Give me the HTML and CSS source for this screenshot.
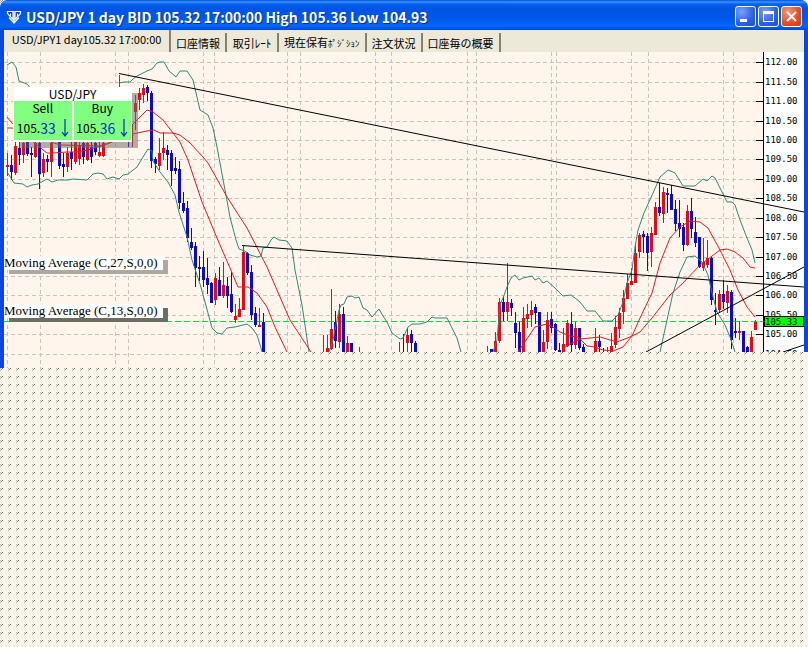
FILE: index.html
```
<!DOCTYPE html>
<html lang="ja">
<head>
    <meta charset="UTF-8">
    <meta name="viewport" content="width=device-width, initial-scale=1.0">
    <title>USD/JPY 1 day</title>
    <link rel="stylesheet" href="styles.css">
</head>
<body>

    <div class="window">
        <header class="titlebar">
            <svg class="logo" viewBox="0 0 16 16" aria-hidden="true">
                <path d="M1.500 2.500h5.500v8L1.500 4.500zM9 2.500h5.500v2L9 10.500z" fill="#0a3cc0" stroke="#fff" stroke-width="1.200"/>
                <path d="M8 2v12M4.500 4.500v3M11.500 4.500v3M3 8.500l5 5.500 5-5.500" fill="none" stroke="#fff" stroke-width="1.200"/>
            </svg>
            <h1>USD/JPY 1 day BID 105.32 17:00:00 High 105.36 Low 104.93</h1>
            <div class="window-buttons">
                <button type="button" aria-label="Minimize">
                    <svg viewBox="0 0 19 19"><path d="M4 12h7v3H4z" fill="#fff"/></svg>
                </button>
                <button type="button" aria-label="Maximize">
                    <svg viewBox="0 0 19 19"><path d="M4 4h11v11H4zM5 7v7h9V7z" fill="#fff" fill-rule="evenodd"/></svg>
                </button>
                <button type="button" class="close" aria-label="Close">
                    <svg viewBox="0 0 19 19"><path d="M5 5l9 9M14 5l-9 9" stroke="#fff" stroke-width="2"/></svg>
                </button>
            </div>
        </header>

        <nav class="tabs">
            <button type="button" class="tab active">USD/JPY1 day105.32 17:00:00</button>
            <button type="button" class="tab">口座情報</button>
            <button type="button" class="tab">取引ﾚｰﾄ</button>
            <button type="button" class="tab">現在保有<span class="kana">ﾎﾟｼﾞｼｮﾝ</span></button>
            <button type="button" class="tab">注文状況</button>
            <button type="button" class="tab">口座毎の概要</button>
        </nav>

        <main class="chart">
            <svg id="chart" viewBox="4 52 800 316">
                <rect class="plot" x="4" y="52" width="760" height="316"/>
                <g id="grid" class="grid"></g>
                <path class="last-price" d="M4 321.500H763"/>

                <g id="candles" shape-rendering="crispEdges"></g>

                <!-- bands -->
                <g class="band">
                    <polyline points="7,65 12,62 16,67 19,81 27,84 32,90"/>
                    <polyline points="119,83 124,82 130,82 133,79 137,76 147,71 152,69 157,63 160,62 164,62 169,71 176,77 180,71 187,71 193,80 200,110 208,115 213,128 217,147 225,190 230,217 236,240 239,249 245,251 250,255 257,257 261,256 263,248 267,247 271,240 274,237 279,240 287,241 292,248 295,270 302,305 309,352"/>
                    <polyline points="329,352 333,340 339,310 341,305 344,304 347,297 352,296 355,298 359,297 363,308 367,310 372,317 379,309 383,316 387,322 392,333 400,339 403,338 408,327 412,324 420,324 427,322 432,317 435,318 447,318 452,328 457,338 461,352"/>
                    <polyline points="493,352 497,340 500,305 503,298 507,287 511,278 515,275 519,280 523,278 532,276 535,280 539,278 543,283 547,281 555,288 563,296 571,295 575,298 580,302 587,311 595,311 603,321 612,321 618,315 623,302 627,283 632,270 635,247 638,230 644,213 653,193 660,177 668,170 675,173 683,186 695,186 703,179 707,181 712,176 715,178 727,202 732,202 735,205 740,220 747,238 752,250 755,263"/>
                    <polyline points="7,172 11,178 14,183 23,184 27,187 32,185 38,184 47,179 52,182 58,180 68,180 73,179 87,180 93,174 98,173 103,174 107,179 113,177 119,179 123,175 128,174 137,167 143,157 148,149 152,151 153,161 160,172 168,182 175,195 179,212 187,237 192,260 200,284 205,302 212,328 217,333 222,334 227,328 235,327 247,324 252,328 257,335 261,348 262,352"/>
                    <polyline points="660,352 667,320 673,293 680,272 687,257 695,256 702,262 708,275 712,293 717,312 725,325 730,337 735,352"/>
                </g>

                <!-- moving averages -->
                <g class="average">
                    <polyline points="7,117 12,123 20,130 32,141 47,153 53,153 67,152 77,152 88,150 110,143 124,134 132,125 140,117 147,110 153,112 163,120 173,133 180,142 188,160 202,202 217,238 230,268 238,287 248,287 257,293 267,307 275,327 287,352"/>
                    <polyline points="7,128 12,128 60,145 100,146 115,141 128,135 147,131 154,130 160,133 173,133 180,135 190,143 203,157 208,163 227,197 247,228 267,267 290,320 311,352"/>
                    <polyline points="518,352 535,327 547,324 553,327 560,332 570,336 578,337 587,346 595,347 603,350 613,351 623,347 632,336 640,318 652,293 660,263 670,238 680,227 690,221 700,222 708,228 720,250 730,270 738,290 747,307 755,317"/>
                    <polyline points="562,349 570,344 580,339 600,337 617,342 630,337 640,332 652,318 670,295 683,283 700,265 712,256 720,250 727,249 735,252 743,258 750,267 755,268"/>
                    <path d="M119.500 75v12"/>
                </g>

                <!-- trend lines -->
                <g class="trend">
                    <path d="M119 73.500L804 212M242 245.500L804 287M646 352L804 267M783 352L804 345"/>
                </g>

                <g id="axis" class="axis"></g>
                <g class="price-tag">
                    <rect x="764.500" y="316.500" width="39" height="10"/>
                    <text x="765" y="325">105.33</text>
                </g>
            </svg>

            <section class="quote">
                <h2>USD/JPY</h2>
                <div class="quote-row">
                    <button type="button">
                        <span class="side">Sell</span>
                        <span class="price">105.<b>33</b>
                            <svg viewBox="0 0 8 20"><path d="M4 1v17M1 14l3 4 3-4" fill="none" stroke="#0030c8" stroke-width="1.200"/></svg>
                        </span>
                    </button>
                    <button type="button">
                        <span class="side">Buy</span>
                        <span class="price">105.<b>36</b>
                            <svg viewBox="0 0 8 20"><path d="M4 1v17M1 14l3 4 3-4" fill="none" stroke="#0030c8" stroke-width="1.200"/></svg>
                        </span>
                    </button>
                </div>
            </section>

            <div class="legend">
                <p>Moving Average (C,27,S,0,0)</p>
                <p class="dark">Moving Average (C,13,S,0,0)</p>
            </div>
        </main>
        <div class="desktop-edge"></div>
    </div>

    <script src="chart.js"></script>
</body>
</html>
```
FILE: styles.css
```
* {
    box-sizing: border-box;
}

body, html {
    margin: 0;
    padding: 0;
    min-height: 100%;
}

/* Dotted desktop */
body, .desktop-edge {
    background-color: #fff5ec;
    background-image: url("data:image/svg+xml,%3Csvg xmlns='http://www.w3.org/2000/svg' width='8' height='8' shape-rendering='crispEdges'%3E%3Cpath d='M2 0h1v1h-1zM1 1h1v1h-1z' fill='%23908880'/%3E%3Cpath d='M0 0h1v1h-1zM0 2h1v1h-1z' fill='%23b8b0a8'/%3E%3C/svg%3E");
}

body {
    font-family: "Noto Sans CJK JP", sans-serif;
    font-size: 11px;
    color: #000;
}

button {
    margin: 0;
    padding: 0;
    border: 0;
    font: inherit;
    color: inherit;
}

.window {
    position: relative;
}

/* Title bar */
.titlebar {
    display: flex;
    align-items: center;
    gap: 4px;
    height: 30px;
    padding: 3px 6px 0;
    border-radius: 7px 7px 0 0;
    background: linear-gradient(#0050d8 0, #3c94ff 2px, #0560f0 4px, #0054e0 9px, #0058ea 18px, #0066ff 26px, #0048d0 30px);
}

.logo {
    width: 16px;
    height: 16px;
}

.titlebar h1 {
    flex: 1;
    margin: 0;
    font-size: 14px;
    font-weight: bold;
    line-height: 20px;
    white-space: nowrap;
    color: #fff;
    text-shadow: 1px 1px 0 #0a2f8c;
}

.window-buttons {
    display: flex;
    gap: 2px;
}

.window-buttons button {
    width: 21px;
    height: 21px;
    border: 1px solid #fff;
    border-radius: 3px;
    background: radial-gradient(circle at 30% 25%, #7ba0f8, #2c5fe8 60%, #1c4cd0);
}

.window-buttons .close {
    background: radial-gradient(circle at 30% 25%, #f09878, #e04c24 60%, #c83c14);
}

.window-buttons svg {
    display: block;
    width: 19px;
    height: 19px;
}

/* Tabs */
.tabs {
    display: flex;
    align-items: flex-end;
    height: 22px;
    border: solid #0a46e0;
    border-width: 0 4px;
    background: #ece9d8;
}

.tab {
    min-width: 52px;
    height: 19px;
    padding: 0 5px;
    border-right: 2px solid #85826f;
    background: none;
    line-height: 16px;
    white-space: nowrap;
}

.tab.active {
    min-width: 167px;
    height: 22px;
    padding-bottom: 4px;
}

.kana {
    font-size: 9px;
}

/* Chart */
.chart {
    position: relative;
    border: solid #0a46e0;
    border-width: 0 4px;
    background: #fff;
}

#chart {
    display: block;
    width: 100%;
    height: auto;
}

.plot {
    fill: #fff5ec;
}

.grid {
    stroke: #c8c6b2;
    stroke-dasharray: 4 3;
}

.last-price {
    stroke: #00e62c;
    stroke-dasharray: 6 3;
}

.band, .average, .trend {
    fill: none;
    stroke-width: 1;
}

.band {
    stroke: #2f8875;
}

.average {
    stroke: #dc1c24;
}

.trend, .axis {
    stroke: #000;
}

.up {
    fill: #e60a14;
}

.down {
    fill: #0a0ad2;
}

.axis text, .price-tag text {
    stroke: none;
    fill: #000;
    font-family: "DejaVu Sans Mono", monospace;
    font-size: 9px;
}

.price-tag rect {
    fill: #0f0;
    stroke: #000;
}

/* Quote panel floating over the chart */
.quote {
    position: absolute;
    top: 35px;
    left: 9px;
    width: 119px;
    padding: 0 1px 2px;
    background: #fff;
    box-shadow: 6px 6px 0 rgba(110, 100, 95, 0.5);
}

.quote h2 {
    margin: 0;
    font-size: 12px;
    font-weight: normal;
    line-height: 14px;
    text-align: center;
}

.quote-row {
    display: flex;
    gap: 2px;
}

.quote button {
    flex: 1;
    height: 39px;
    background: #80ff80;
}

.side {
    display: block;
    font-size: 12px;
    line-height: 14px;
}

.price {
    display: flex;
    align-items: center;
    justify-content: center;
    height: 25px;
    font-size: 12px;
}

.price b {
    font-size: 14px;
    font-weight: normal;
    color: #0030c8;
}

.price svg {
    width: 8px;
    height: 20px;
    margin-left: 5px;
}

/* Indicator names */
.legend {
    position: absolute;
    top: 204px;
    left: 0;
}

.legend p {
    margin: 0 0 34px;
    padding-right: 5px;
    background: #fff;
    box-shadow: 5px 4px 0 #aea8a2;
    font-family: "Liberation Serif", serif;
    font-size: 13px;
    line-height: 14px;
}

.legend .dark {
    box-shadow: 5px 4px 0 #6c6e66;
}

/* The desktop shows through under the right part of the window */
.desktop-edge {
    position: absolute;
    right: 0;
    bottom: 0;
    left: 240px;
    height: 16px;
}
```
FILE: chart.js
```
// x, high, low, body top, body bottom, direction
const candles = [
    [7,153,176,165,167,1],[11,155,180,165,172,0],[15,142,175,146,173,1],[19,142,165,148,155,0],
    [23,142,163,143,155,1],[27,142,156,142,154,0],[31,147,177,153,155,0],[35,142,158,143,157,1],
    [39,142,189,143,174,0],[43,153,177,159,173,1],[47,155,172,159,162,0],[51,142,177,143,162,1],
    [59,142,169,142,166,0],[63,153,177,164,167,0],[67,147,172,153,167,1],[71,142,170,152,159,0],
    [75,142,164,142,162,1],[79,142,165,146,159,1],[83,142,164,143,157,0],[87,142,161,143,160,1],
    [91,142,163,147,157,0],[95,142,155,143,152,0],[99,142,157,152,156,1],[103,142,157,143,156,1],
    [128,142,147,142,142,0],[132,125,147,142,142,1],
    [135,95,130,103,112,1],[139,88,110,93,100,1],[143,84,103,88,95,1],[147,85,101,87,93,0],
    [151,91,168,93,161,0],[155,157,173,159,164,0],[159,138,170,153,166,1],[163,132,160,148,153,1],
    [167,145,170,150,155,0],[171,150,186,153,171,0],[175,157,174,168,171,0],[179,161,209,169,203,0],
    [183,192,213,203,211,0],[187,201,242,208,238,0],[191,228,250,242,248,0],[195,242,287,246,268,0],
    [199,256,281,267,269,0],[203,251,287,267,280,0],[207,258,294,278,285,0],[211,282,303,283,303,0],
    [215,273,305,278,300,1],[219,267,296,280,296,0],[223,262,298,285,296,1],[227,277,308,286,296,0],
    [231,272,313,294,312,0],[235,304,323,316,320,1],[239,298,317,309,317,1],[243,246,310,252,310,1],
    [247,252,275,253,273,0],[251,265,320,272,315,0],[255,307,327,313,325,0],[259,308,327,325,327,1],
    [263,313,352,322,352,0],[323,335,352,352,352,1],[327,335,352,348,352,1],[331,289,350,329,349,1],
    [335,311,348,322,341,0],[339,304,348,314,342,1],[343,307,352,314,352,0],[347,336,352,343,352,1],
    [351,343,352,343,352,0],[359,347,352,352,352,1],[399,342,352,352,352,1],[403,334,352,352,352,0],
    [407,328,352,335,343,1],[411,330,352,334,343,0],[415,341,352,343,352,0],[487,346,352,352,352,1],
    [491,349,352,349,352,0],[495,332,352,341,352,1],[499,298,343,302,341,1],[503,297,321,302,312,0],
    [507,263,321,302,312,1],[511,299,316,303,308,0],[515,312,348,323,333,0],[519,321,352,332,352,0],
    [523,307,352,318,352,1],[527,304,328,314,319,1],[531,301,327,310,315,1],[535,304,324,307,313,0],
    [539,312,352,312,352,0],[543,330,352,342,352,1],[547,312,349,320,342,1],[551,312,333,319,328,0],
    [555,323,351,324,350,0],[559,343,352,350,352,0],[563,328,352,344,352,1],[567,320,347,323,346,1],
    [571,312,352,324,345,0],[575,322,349,328,345,1],[579,328,350,328,348,0],[583,344,352,347,352,0],
    [595,328,352,341,352,1],[599,335,352,341,347,0],[603,348,352,352,352,0],[607,347,352,352,352,1],
    [611,333,352,346,352,1],[615,316,348,327,345,1],[619,308,338,313,329,1],[623,290,324,298,312,1],
    [627,274,299,283,299,1],[631,268,285,281,285,1],[635,243,283,253,283,1],[639,233,258,235,252,1],
    [643,231,253,234,237,0],[647,233,271,236,253,0],[651,227,267,233,252,1],[655,202,235,207,235,1],
    [659,183,216,207,213,0],[663,187,223,192,214,1],[667,188,213,193,195,0],[671,185,210,194,210,0],
    [675,200,231,209,224,0],[679,200,237,223,229,0],[683,223,251,227,245,0],[687,205,246,211,245,1],
    [691,198,238,211,229,0],[695,217,247,232,243,0],[699,237,268,237,267,0],[703,238,271,262,268,1],
    [707,240,268,258,265,1],[711,257,305,258,300,0],[715,293,325,310,312,0],[719,290,313,294,310,1],
    [723,280,309,294,302,0],[727,285,313,291,303,1],[731,290,349,292,340,0],[735,318,338,331,333,0],
    [739,321,340,331,333,1],[743,331,352,331,352,0],[747,346,352,347,352,0],[751,331,352,337,352,1],
    [755,320,330,322,330,1]
];

const gridX = [7, 40, 115, 128, 203, 214, 287, 300, 375, 391, 467, 476, 551, 556, 631, 648, 723, 733];
const gridY = [62, 82, 101, 121, 140, 159, 179, 198, 218, 237, 257, 276, 295, 315, 334, 354];

let grid = '';
let axis = '<path d="M763.5 52V352"/>';

gridX.forEach(x => {
    grid += `<path d="M${x + 0.5} 52V368"/>`;
});

gridY.forEach((y, i) => {
    const price = (112 - i * 0.5).toFixed(2);
    grid += `<path d="M4 ${y + 0.5}H763"/>`;
    axis += `<path d="M756 ${y + 0.5}H763"/><text x="765" y="${y + 3}">${price}</text>`;
});

document.getElementById('grid').innerHTML = grid;
document.getElementById('axis').innerHTML = axis;

document.getElementById('candles').innerHTML = candles.map(([x, high, low, top, bottom, up]) =>
    `<g class="${up ? 'up' : 'down'}">` +
    `<rect x="${x}" y="${high}" width="1" height="${low - high}"/>` +
    `<rect x="${x - 1}" y="${top}" width="3" height="${bottom - top}"/></g>`
).join('');
```
